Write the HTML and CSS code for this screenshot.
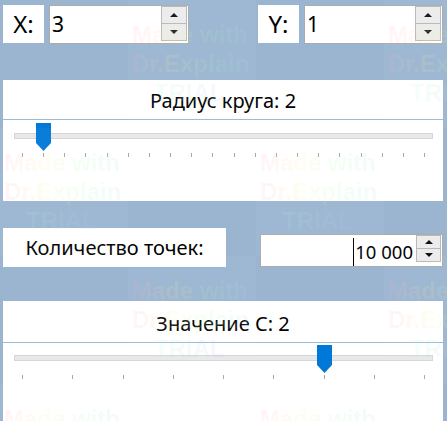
FILE: index.html
```html
<!DOCTYPE html>
<html lang="ru">
<head>
<meta charset="utf-8">
<title>Параметры</title>
<link rel="stylesheet" href="styles.css">
</head>
<body>
<div class="app">
  <div class="row coords">
    <div class="field">
      <div class="label-box xy-label">X:</div>
      <div class="spin-input xy-input">
        <span class="value">3</span>
        <div class="spinner">
          <div class="spin-btn"><span class="arrow up"></span></div>
          <div class="spin-btn"><span class="arrow down"></span></div>
        </div>
      </div>
    </div>
    <div class="field">
      <div class="label-box xy-label">Y:</div>
      <div class="spin-input xy-input y-input">
        <span class="value">1</span>
        <div class="spinner">
          <div class="spin-btn"><span class="arrow up"></span></div>
          <div class="spin-btn"><span class="arrow down"></span></div>
        </div>
      </div>
    </div>
  </div>

  <section class="slider-panel radius-panel">
    <div class="slider-title">Радиус круга: 2</div>
    <div class="slider-body">
      <div class="track-wrap">
        <div class="track"></div>
        <div class="thumb" style="left: 33px"></div>
      </div>
      <div class="ticks">
        <span></span><span></span><span></span><span></span><span></span>
        <span></span><span></span><span></span><span></span><span></span>
        <span></span><span></span><span></span><span></span><span></span>
        <span></span><span></span><span></span><span></span><span></span>
      </div>
    </div>
  </section>

  <div class="row count-row">
    <div class="label-box count-label">Количество точек:</div>
    <div class="spin-input count-input">
      <span class="value"><span class="caret"></span>10 000</span>
      <div class="spinner">
        <div class="spin-btn"><span class="arrow up"></span></div>
        <div class="spin-btn"><span class="arrow down"></span></div>
      </div>
    </div>
  </div>

  <section class="slider-panel c-panel">
    <div class="slider-title">Значение C: 2</div>
    <div class="slider-body">
      <div class="track-wrap">
        <div class="track"></div>
        <div class="thumb" style="left: 314px"></div>
      </div>
      <div class="ticks">
        <span></span><span></span><span></span><span></span><span></span>
        <span></span><span></span><span></span><span></span>
      </div>
    </div>
  </section>
</div>

<div class="watermark" aria-hidden="true">
  <div class="wm-grid">
    <div class="wm-cell"></div>
    <div class="wm-cell on"><p>Made with</p><p>Dr.Explain</p><p class="trial">TRIAL</p></div>
    <div class="wm-cell"></div>
    <div class="wm-cell on"><p>Made with</p><p>Dr.Explain</p><p class="trial">TRIAL</p></div>

    <div class="wm-cell on"><p>Made with</p><p>Dr.Explain</p><p class="trial">TRIAL</p></div>
    <div class="wm-cell"></div>
    <div class="wm-cell on"><p>Made with</p><p>Dr.Explain</p><p class="trial">TRIAL</p></div>
    <div class="wm-cell"></div>

    <div class="wm-cell"></div>
    <div class="wm-cell on"><p>Made with</p><p>Dr.Explain</p><p class="trial">TRIAL</p></div>
    <div class="wm-cell"></div>
    <div class="wm-cell on"><p>Made with</p><p>Dr.Explain</p><p class="trial">TRIAL</p></div>

    <div class="wm-cell on"><p>Made with</p><p>Dr.Explain</p><p class="trial">TRIAL</p></div>
    <div class="wm-cell"></div>
    <div class="wm-cell on"><p>Made with</p><p>Dr.Explain</p><p class="trial">TRIAL</p></div>
    <div class="wm-cell"></div>
  </div>
</div>
</body>
</html>
```

FILE: styles.css
```css
html, body {
  margin: 0;
  padding: 0;
}

body {
  width: 447px;
  height: 421px;
  overflow: hidden;
  position: relative;
  background: #9bb5d1;
  font-family: "Noto Sans", "Open Sans", "DejaVu Sans", sans-serif;
  color: #000;
}

.app {
  padding: 5px 4px 0 3px;
  display: flex;
  flex-direction: column;
  height: 421px;
  box-sizing: border-box;
  overflow: hidden;
}

.row {
  display: flex;
  justify-content: space-between;
}

.field {
  display: flex;
  align-items: flex-start;
  gap: 5px;
}

.label-box {
  background: #fff;
  display: flex;
  align-items: center;
  justify-content: center;
  box-sizing: border-box;
}

.xy-label {
  width: 41px;
  height: 38px;
  font-size: 24px;
  padding-bottom: 2px;
}

/* ---------- spin inputs ---------- */
.spin-input {
  background: #fff;
  border: 1px solid #ababab;
  box-sizing: border-box;
  display: flex;
  align-items: center;
}

.xy-input {
  width: 140px;
  height: 39px;
  font-size: 21px;
}

.y-input {
  width: 139px;
}

.xy-input .value {
  padding-left: 2px;
  flex: 1;
  padding-bottom: 1px;
}

.spinner {
  align-self: flex-start;
  display: flex;
  flex-direction: column;
  margin-right: 1px;
}

.xy-input .spinner {
  width: 26px;
}

.xy-input .spin-btn {
  height: 18px;
}

.spin-btn {
  box-sizing: border-box;
  border: 1px solid #b9b9b9;
  background: #ececec;
  display: flex;
  align-items: center;
  justify-content: center;
}

.spin-btn + .spin-btn {
  margin-top: -1px;
}

.arrow {
  width: 0;
  height: 0;
  border-left: 4px solid transparent;
  border-right: 4px solid transparent;
}

.arrow.up {
  border-bottom: 4px solid #111;
}

.arrow.down {
  border-top: 4px solid #111;
}

/* ---------- slider panels ---------- */
.slider-panel {
  background: #fff;
  display: flex;
  flex-direction: column;
}

.radius-panel {
  margin-top: 36px;
  height: 121px;
}

.c-panel {
  margin-top: 34px;
  flex: 1;
}

.slider-title {
  box-sizing: border-box;
  height: 40px;
  border-bottom: 1px solid #9fb8d4;
  display: flex;
  align-items: center;
  justify-content: center;
  font-size: 20px;
  padding-top: 2px;
}

.c-panel .slider-title {
  height: 42px;
  padding-top: 4px;
}

.slider-body {
  padding-top: 3px;
}

.c-panel .slider-body {
  padding-top: 2px;
}

.track-wrap {
  position: relative;
  height: 28px;
  box-sizing: border-box;
  padding: 10px 10px 0 11px;
}

.track {
  height: 6px;
  box-sizing: border-box;
  border: 1px solid #d6d6d6;
  background: #e7e8e8;
}

.thumb {
  position: absolute;
  top: 0;
  width: 15px;
  height: 28px;
  background: #0078d7;
  clip-path: polygon(0 0, 100% 0, 100% 71%, 50% 100%, 0 71%);
}

.ticks {
  display: flex;
  justify-content: space-between;
  margin: 2px 18px 0 19px;
  height: 4px;
}

.ticks span {
  width: 1px;
  height: 4px;
  background: #a8a8a8;
}

/* ---------- count row ---------- */
.count-row {
  margin-top: 27px;
  align-items: flex-end;
}

.count-label {
  width: 223px;
  height: 39px;
  font-size: 20px;
  padding-bottom: 1px;
}

.count-input {
  width: 183px;
  height: 33px;
  font-size: 18.5px;
}

.count-input .value {
  flex: 1;
  display: flex;
  align-items: center;
  justify-content: flex-end;
  padding-right: 3px;
  padding-top: 2px;
}

.caret {
  display: inline-block;
  width: 1px;
  height: 28px;
  background: #000;
  margin-right: 1px;
}

.count-input .spinner {
  width: 25px;
}

.count-input .spin-btn {
  height: 14px;
}

/* ---------- watermark overlay ---------- */
.watermark {
  position: absolute;
  left: 0;
  top: 0;
  width: 447px;
  height: 421px;
  overflow: hidden;
  pointer-events: none;
}

.wm-grid {
  display: grid;
  grid-template-columns: repeat(4, 128px);
  grid-template-rows: repeat(4, 128px);
  font-family: "Liberation Sans", Arial, sans-serif;
  font-weight: bold;
  font-size: 24px;
}

.wm-cell {
  overflow: hidden;
}

.wm-cell.on {
  background: rgba(255, 255, 255, 0.04);
  box-sizing: border-box;
  padding: 20px 0 0 4px;
}

.wm-cell p {
  margin: 0;
  line-height: 29px;
  white-space: nowrap;
  background: linear-gradient(90deg, rgba(255, 170, 200, 0.14), rgba(255, 240, 150, 0.14) 35%, rgba(170, 255, 170, 0.14) 65%, rgba(170, 220, 255, 0.14));
  -webkit-background-clip: text;
  background-clip: text;
  color: transparent;
  width: max-content;
}

.wm-cell p.trial {
  margin-left: 22px;
  background: linear-gradient(90deg, rgba(170, 255, 200, 0.14), rgba(190, 190, 255, 0.14));
  -webkit-background-clip: text;
  background-clip: text;
}
```
